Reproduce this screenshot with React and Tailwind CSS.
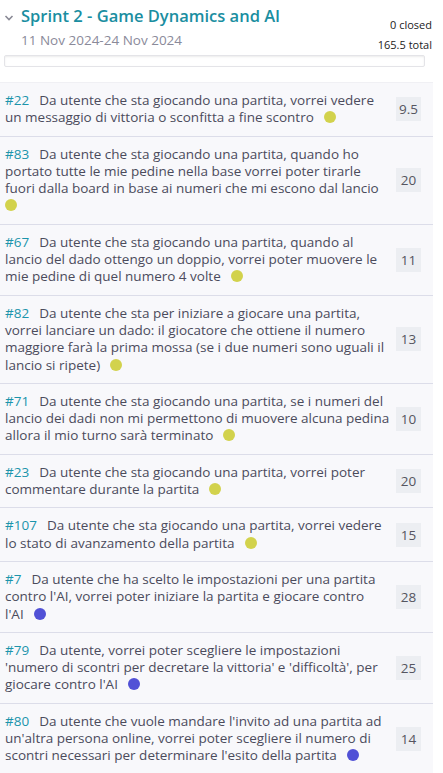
const items = [
    { id: 22, lines: ["Da utente che sta giocando una partita, vorrei vedere", "un messaggio di vittoria o sconfitta a fine scontro"], points: "9.5", color: "yellow" },
    { id: 83, lines: ["Da utente che sta giocando una partita, quando ho", "portato tutte le mie pedine nella base vorrei poter tirarle", "fuori dalla board in base ai numeri che mi escono dal lancio", ""], points: "20", color: "yellow" },
    { id: 67, lines: ["Da utente che sta giocando una partita, quando al", "lancio del dado ottengo un doppio, vorrei poter muovere le", "mie pedine di quel numero 4 volte"], points: "11", color: "yellow" },
    { id: 82, lines: ["Da utente che sta per iniziare a giocare una partita,", "vorrei lanciare un dado: il giocatore che ottiene il numero", "maggiore farà la prima mossa (se i due numeri sono uguali il", "lancio si ripete)"], points: "13", color: "yellow" },
    { id: 71, lines: ["Da utente che sta giocando una partita, se i numeri del", "lancio dei dadi non mi permettono di muovere alcuna pedina", "allora il mio turno sarà terminato"], points: "10", color: "yellow" },
    { id: 23, lines: ["Da utente che sta giocando una partita, vorrei poter", "commentare durante la partita"], points: "20", color: "yellow" },
    { id: 107, lines: ["Da utente che sta giocando una partita, vorrei vedere", "lo stato di avanzamento della partita"], points: "15", color: "yellow" },
    { id: 7, lines: ["Da utente che ha scelto le impostazioni per una partita", "contro l'AI, vorrei poter iniziare la partita e giocare contro", "l'AI"], points: "28", color: "blue" },
    { id: 79, lines: ["Da utente, vorrei poter scegliere le impostazioni", "'numero di scontri per decretare la vittoria' e 'difficoltà', per", "giocare contro l'AI"], points: "25", color: "blue" },
    { id: 80, lines: ["Da utente che vuole mandare l'invito ad una partita ad", "un'altra persona online, vorrei poter scegliere il numero di", "scontri necessari per determinare l'esito della partita"], points: "14", color: "blue" },
];

function StoryRow({ item }) {
    const last = item.lines.length - 1;
    return (
        <div className="flex items-center border-b border-[#dcdde9] bg-[#f8f8fb] pl-[5px] pr-[12px] pt-[9px] pb-[9px]">
            <div className="flex-1 whitespace-nowrap pr-[6px] text-[13.5px] leading-[17.3px] text-[#4b4b5c]">
                {item.lines.map((line, i) => (
                    <div key={i} className="h-[17.3px]">
                        {i === 0 && <span className="mr-[10px] text-[#1b94ab]">#{item.id}</span>}
                        {line}
                        {i === last && (
                            <span
                                className={
                                    item.color === "blue"
                                        ? "inline-block h-[12px] w-[12px] rounded-full bg-[#5151d6] align-[-1px]"
                                        : "inline-block h-[12px] w-[12px] rounded-full bg-[#d2d24c] align-[-1px]"
                                }
                                style={{ marginLeft: line ? 10 : 0 }}
                            />
                        )}
                    </div>
                ))}
            </div>
            <div className="flex h-[24px] min-w-[25px] items-center justify-center bg-[#eceef2] px-[3px] text-[13.5px] text-[#555560]">
                {item.points}
            </div>
        </div>
    );
}

export default function App() {
    return (
        <div className="min-h-[773px] w-[443px] bg-white font-['Open_Sans',sans-serif]">
            <div className="flex items-start justify-between pl-[4px] pr-[11px] pt-[5px]">
                <div className="flex items-start">
                    <svg width="10" height="8" viewBox="0 0 10 8" className="mt-[9px] mr-[7px]">
                        <path d="M1.5 2 L5 5.5 L8.5 2" fill="none" stroke="#8a8a96" strokeWidth="1.6" />
                    </svg>
                    <div>
                        <div className="text-[16.5px] font-semibold leading-[22px] text-[#1a8ea1]">
                            Sprint 2 - Game Dynamics and AI
                        </div>
                        <div className="mt-[4px] text-[13.5px] leading-[18px] text-[#8a8a9a]">
                            11 Nov 2024-24 Nov 2024
                        </div>
                    </div>
                </div>
                <div className="pt-[10px] text-right text-[11px] leading-[20px] text-[#222]">
                    <div>0 closed</div>
                    <div>165.5 total</div>
                </div>
            </div>
            <div className="ml-[4px] h-[12px] w-[421px] rounded-[2px] border border-[#e4e4e8] bg-white shadow-[inset_0_1px_2px_rgba(0,0,0,0.08)]" />
            <div className="mt-[15px] w-[433px] border-t border-[#f0f0f4]">
                {items.map((item) => (
                    <StoryRow key={item.id} item={item} />
                ))}
            </div>
        </div>
    );
}
